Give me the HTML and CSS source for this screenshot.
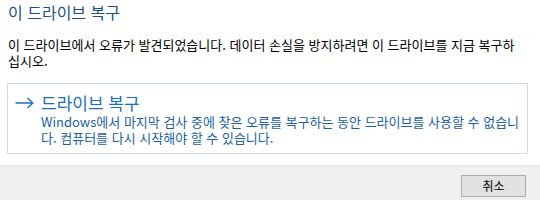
FILE: index.html
```html
<!DOCTYPE html>
<html lang="ko">
<head>
<meta charset="utf-8">
<link rel="stylesheet" href="styles.css">
</head>
<body>
<div class="dialog">
  <div class="content">
    <h1 class="title">이 드라이브 복구</h1>
    <p class="message">이 드라이브에서 오류가 발견되었습니다. 데이터 손실을 방지하려면 이 드라이브를 지금 복구하십시오.</p>
    <div class="option">
      <svg class="arrow" width="19" height="12" viewBox="0 0 19 12"><path d="M0.5 6H17.5M12.5 1L17.8 6L12.5 11" fill="none" stroke="#1f6fbf" stroke-width="1.4"/></svg>
      <div class="option-text">
        <div class="option-title">드라이브 복구</div>
        <div class="option-desc">Windows에서 마지막 검사 중에 찾은 오류를 복구하는 동안 드라이브를 사용할 수 없습니다. 컴퓨터를 다시 시작해야 할 수 있습니다.</div>
      </div>
    </div>
  </div>
  <div class="footer">
    <button class="btn">취소</button>
  </div>
</div>
</body>
</html>
```

FILE: styles.css
```css
html, body {
  margin: 0;
  padding: 0;
  background: #ffffff;
}
body {
  font-family: "Noto Sans CJK KR", "Noto Sans", sans-serif;
  width: 540px;
  height: 200px;
  overflow: hidden;
}
.dialog {
  display: flex;
  flex-direction: column;
  height: 200px;
}
.content {
  height: 165px;
  padding: 0 12px 0 7px;
  box-sizing: border-box;
}
.title {
  margin: 0;
  padding: 1px 0 0 1px;
  font-size: 16px;
  font-weight: normal;
  line-height: 22px;
  color: #1e4f8a;
}
.message {
  margin: 14px 0 0 1px;
  font-size: 13px;
  line-height: 16px;
  color: #000000;
  width: 514px;
}
.option {
  margin-top: 14px;
  border: 1px solid #cfdbe7;
  height: 71px;
  box-sizing: border-box;
  display: flex;
  align-items: flex-start;
  padding: 8px 0 0 7px;
}
.arrow {
  margin-top: 5px;
  flex: none;
}
.option-text {
  margin-left: 7px;
}
.option-title {
  font-size: 17px;
  line-height: 22px;
  color: #1a6dbb;
}
.option-desc {
  font-size: 13px;
  line-height: 16px;
  color: #1a5fa8;
  width: 483px;
}
.footer {
  flex: 1;
  background: #f0f0f0;
  border-top: 1px solid #e6e6e6;
  display: flex;
  justify-content: flex-end;
  align-items: flex-start;
  padding: 9px 14px 0 0;
}
.btn {
  width: 65px;
  height: 22px;
  border: 1px solid #adadad;
  background: #e1e1e1;
  font-family: "Noto Sans CJK KR", "Noto Sans", sans-serif;
  font-size: 12px;
  color: #000;
  padding: 0;
  line-height: 18px;
}
```
